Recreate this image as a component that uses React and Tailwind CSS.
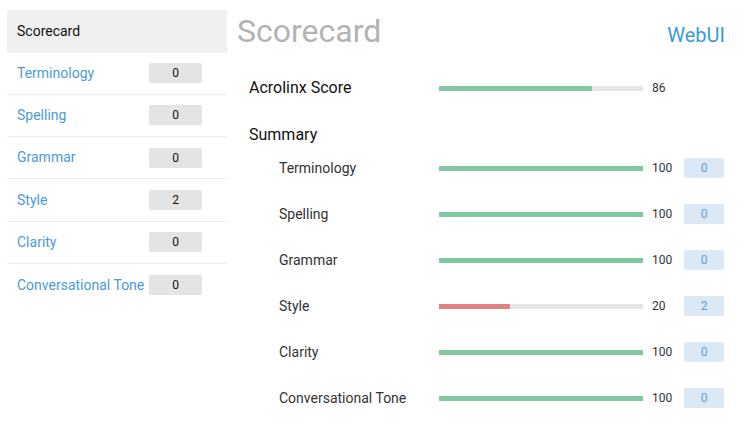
const sideItems = [
  { name: "Terminology", count: 0 },
  { name: "Spelling", count: 0 },
  { name: "Grammar", count: 0 },
  { name: "Style", count: 2 },
  { name: "Clarity", count: 0 },
  { name: "Conversational Tone", count: 0 },
];

const summary = [
  { name: "Terminology", score: 100, count: 0 },
  { name: "Spelling", score: 100, count: 0 },
  { name: "Grammar", score: 100, count: 0 },
  { name: "Style", score: 20, count: 2, fill: 35, bad: true },
  { name: "Clarity", score: 100, count: 0 },
  { name: "Conversational Tone", score: 100, count: 0 },
];

function Bar({ fill, bad }) {
  return (
    <div className="w-[204px] h-[5px] bg-[#e6e6e6]">
      <div
        className={bad ? "h-full bg-[#e38282]" : "h-full bg-[#80c8a0]"}
        style={{ width: `${fill}%` }}
      />
    </div>
  );
}

function Sidebar() {
  return (
    <div className="w-[220px] shrink-0">
      <div className="h-[42.5px] bg-[#f0f0f0] flex items-center px-[10px] text-[14px] text-[#111]">
        Scorecard
      </div>
      {sideItems.map((item, i) => (
        <div
          key={item.name}
          className={
            "h-[42.3px] flex items-center justify-between pl-[10px] pr-[25px] " +
            (i < sideItems.length - 1 ? "border-b border-[#ebebeb]" : "")
          }
        >
          <span className="text-[14px] text-[#4a9bd6] whitespace-nowrap">
            {item.name}
          </span>
          <span className="w-[53px] h-[20px] rounded-[2px] bg-[#e4e4e4] flex items-center justify-center text-[12px] text-[#111]">
            {item.count}
          </span>
        </div>
      ))}
    </div>
  );
}

export default function App() {
  return (
    <div
      className="w-[748px] h-[427px] bg-white flex gap-[10px] pt-[10px] pl-[7px] pr-[23px]"
      style={{ fontFamily: "Roboto, 'Liberation Sans', sans-serif" }}
    >
      <Sidebar />
      <div className="flex-1">
        <div className="flex items-baseline justify-between h-[42px]">
          <span className="text-[32px] leading-[42px] text-[#b3b3b3]">Scorecard</span>
          <span className="text-[20px] text-[#3d9ad8]">WebUI</span>
        </div>
        <div className="pl-[12px]">
          <div className="h-[72px] flex items-center">
            <span className="w-[190px] text-[16px] text-[#111]">Acrolinx Score</span>
            <Bar fill={75} />
            <span className="ml-[9px] text-[12px] text-[#333]">86</span>
          </div>
          <div className="h-[22px] flex items-center text-[16px] text-[#111]">
            Summary
          </div>
          <div className="-mt-[1px]">
            {summary.map((row) => (
              <div key={row.name} className="h-[46px] flex items-center">
                <span className="w-[190px] pl-[30px] text-[14px] text-[#333] whitespace-nowrap">
                  {row.name}
                </span>
                <Bar fill={row.fill ?? 100} bad={row.bad} />
                <span className="w-[32px] ml-[9px] text-[12px] text-[#333]">
                  {row.score}
                </span>
                <span className="w-[40px] h-[20px] rounded-[2px] bg-[#dbe8f5] flex items-center justify-center text-[12px] text-[#5b9fd6]">
                  {row.count}
                </span>
              </div>
            ))}
          </div>
        </div>
      </div>
    </div>
  );
}
